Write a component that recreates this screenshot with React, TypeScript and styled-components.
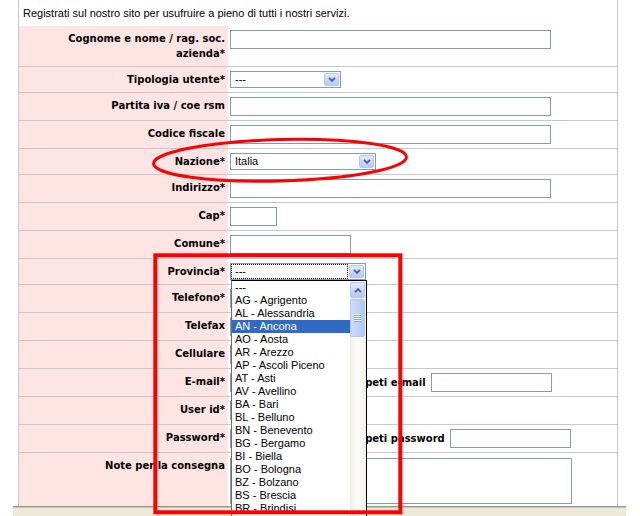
import React from "react";
import styled, { createGlobalStyle } from "styled-components";

const GlobalStyle = createGlobalStyle`
  html, body {
    margin: 0;
    padding: 0;
    background: #fff;
  }
  body {
    font-family: "Liberation Sans", Arial, sans-serif;
    font-size: 11px;
    color: #000;
  }
`;

const Page = styled.div`
  position: relative;
  width: 640px;
  height: 516px;
  overflow: hidden;
  background: #fff;
`;

const Viewport = styled.div`
  height: 506px;
`;

const Frame = styled.div`
  margin-left: 18px;
  width: 600px;
  min-height: 100%;
  box-sizing: border-box;
  border-left: 1px solid #c8c8c8;
  border-right: 1px solid #c8c8c8;
`;

const Intro = styled.p`
  margin: 0;
  height: 26px;
  box-sizing: border-box;
  padding: 6px 4px 5px;
  line-height: 15px;
`;

const Row = styled.div`
  display: grid;
  grid-template-columns: 209px 1fr;
  border-bottom: 1px solid #c8c8c8;
`;

const Label = styled.div`
  background: #ffe4e4;
  padding: 5px 3px 5px 4px;
  text-align: right;
  font: bold 10px/15px "DejaVu Sans", Verdana, sans-serif;
`;

const Field = styled.div`
  align-self: start;
  display: flex;
  align-items: center;
  padding: 4px 0 4px 2px;
`;

const InlineLabel = styled.span`
  margin: 0 5px 0 3px;
  white-space: nowrap;
  font: bold 10px/15px "DejaVu Sans", Verdana, sans-serif;
`;

const TextInput = styled.input<{ $w: number }>`
  box-sizing: border-box;
  width: ${(p) => p.$w}px;
  height: 19px;
  margin: 0;
  padding: 1px 2px;
  border: 1px solid #7f9db9;
  background: #fff;
  font: 11px "Liberation Sans", Arial, sans-serif;
`;

const TextArea = styled.textarea`
  display: block;
  box-sizing: border-box;
  width: 342px;
  height: 46px;
  margin: 1px 0 0;
  border: 1px solid #7f9db9;
  resize: none;
  font: 11px "Liberation Sans", Arial, sans-serif;
`;

const SelectBox = styled.div<{ $w: number }>`
  position: relative;
  display: flex;
  box-sizing: border-box;
  width: ${(p) => p.$w}px;
  height: 17px;
  border: 1px solid #7f9db9;
  background: #fff;
`;

const SelectValue = styled.span<{ $focused?: boolean }>`
  flex: 1;
  margin: 1px 2px 0 1px;
  padding-left: 3px;
  line-height: 13px;
  height: 13px;
  white-space: nowrap;
  overflow: hidden;
  outline: ${(p) => (p.$focused ? "1px dotted #000" : "none")};
`;

const ArrowButton = styled.span<{ $h?: number }>`
  display: flex;
  align-items: center;
  justify-content: center;
  box-sizing: border-box;
  width: 15px;
  height: ${(p) => p.$h ?? 13}px;
  margin: 1px 1px 0 0;
  border: 1px solid #b4c7f4;
  border-radius: 2px;
  background: linear-gradient(#e3ebfe, #c3d3fb 60%, #b6c9f7);
`;

const Popup = styled.div`
  position: absolute;
  z-index: 5;
  top: calc(100% + 1px);
  left: 0;
  display: flex;
  box-sizing: border-box;
  width: 136px;
  height: 250px;
  border: 1px solid #000;
  border-left-color: #6f6f6f;
  background: #fff;
`;

const OptionList = styled.ul`
  flex: 1;
  margin: 0;
  padding: 0;
  list-style: none;
  overflow: hidden;
`;

const Option = styled.li<{ $selected?: boolean }>`
  height: 13px;
  padding-left: 3px;
  line-height: 13px;
  white-space: nowrap;
  background: ${(p) => (p.$selected ? "#316ac5" : "transparent")};
  color: ${(p) => (p.$selected ? "#fff" : "#000")};
`;

const ScrollTrack = styled.div`
  display: flex;
  flex-direction: column;
  width: 16px;
  background: linear-gradient(to right, #efeee7, #fcfcfa 45%, #f1f0ea);
`;

const ScrollThumb = styled.div`
  display: flex;
  align-items: center;
  justify-content: center;
  box-sizing: border-box;
  height: 38px;
  width: 15px;
  margin-top: 1px;
  border: 1px solid #b4c7f4;
  border-radius: 2px;
  background: linear-gradient(to right, #cfdcfd, #c0d2fb 50%, #b3c7f6);
`;

const Grip = styled.span`
  width: 7px;
  height: 8px;
  background: repeating-linear-gradient(
    to bottom,
    #eef3fe 0 1px,
    #8aa4e6 1px 2px
  );
`;

const StatusBar = styled.div`
  position: relative;
  z-index: 1;
  margin-left: 13px;
  width: 613px;
  height: 10px;
  box-sizing: border-box;
  border-top: 1px solid #99978b;
  box-shadow: inset 0 1px 0 #c7c4b6;
  background: #ece9d8;
`;

const Annotations = styled.svg`
  position: absolute;
  inset: 0;
  z-index: 10;
  pointer-events: none;
`;

const Chevron = ({ up }: { up?: boolean }) => (
  <svg width="8" height="5" viewBox="0 0 8 5">
    <polyline
      points={up ? "1,4.2 4,1.2 7,4.2" : "1,0.8 4,3.8 7,0.8"}
      fill="none"
      stroke="#4d6185"
      strokeWidth="1.9"
    />
  </svg>
);

const provinces = [
  "---",
  "AG - Agrigento",
  "AL - Alessandria",
  "AN - Ancona",
  "AO - Aosta",
  "AR - Arezzo",
  "AP - Ascoli Piceno",
  "AT - Asti",
  "AV - Avellino",
  "BA - Bari",
  "BL - Belluno",
  "BN - Benevento",
  "BG - Bergamo",
  "BI - Biella",
  "BO - Bologna",
  "BZ - Bolzano",
  "BS - Brescia",
  "BR - Brindisi",
  "BB - Brindisi",
];

interface SelectProps {
  width: number;
  value: string;
  focused?: boolean;
  children?: React.ReactNode;
}

const Select = ({ width, value, focused, children }: SelectProps) => (
  <SelectBox $w={width}>
    <SelectValue $focused={focused}>{value}</SelectValue>
    <ArrowButton>
      <Chevron />
    </ArrowButton>
    {children}
  </SelectBox>
);

const ProvinceList = () => (
  <Popup>
    <OptionList>
      {provinces.slice(0, 18).map((p) => (
        <Option key={p} $selected={p === "AN - Ancona"}>
          {p}
        </Option>
      ))}
    </OptionList>
    <ScrollTrack>
      <ArrowButton $h={16}>
        <Chevron up />
      </ArrowButton>
      <ScrollThumb>
        <Grip />
      </ScrollThumb>
    </ScrollTrack>
  </Popup>
);

interface FormRow {
  label: string;
  field: React.ReactNode;
}

const rows: FormRow[] = [
  { label: "Cognome e nome / rag. soc. azienda*", field: <TextInput $w={321} /> },
  { label: "Tipologia utente*", field: <Select width={111} value="---" /> },
  { label: "Partita iva / coe rsm", field: <TextInput $w={321} /> },
  { label: "Codice fiscale", field: <TextInput $w={321} /> },
  { label: "Nazione*", field: <Select width={146} value="Italia" /> },
  { label: "Indirizzo*", field: <TextInput $w={321} /> },
  { label: "Cap*", field: <TextInput $w={47} /> },
  { label: "Comune*", field: <TextInput $w={121} /> },
  {
    label: "Provincia*",
    field: (
      <Select width={136} value="---" focused>
        <ProvinceList />
      </Select>
    ),
  },
  { label: "Telefono*", field: <TextInput $w={121} /> },
  { label: "Telefax", field: <TextInput $w={121} /> },
  { label: "Cellulare", field: <TextInput $w={121} /> },
  {
    label: "E-mail*",
    field: (
      <>
        <TextInput $w={121} />
        <InlineLabel>Ripeti e-mail</InlineLabel>
        <TextInput $w={121} />
      </>
    ),
  },
  { label: "User id*", field: <TextInput $w={121} /> },
  {
    label: "Password*",
    field: (
      <>
        <TextInput $w={121} type="password" />
        <InlineLabel>Ripeti password</InlineLabel>
        <TextInput $w={121} type="password" />
      </>
    ),
  },
  { label: "Note per la consegna", field: <TextArea /> },
];

const App = () => (
  <Page>
    <GlobalStyle />
    <Viewport>
      <Frame>
        <Intro>
          Registrati sul nostro sito per usufruire a pieno di tutti i nostri servizi.
        </Intro>
        {rows.map((row) => (
          <Row key={row.label}>
            <Label>{row.label}</Label>
            <Field>{row.field}</Field>
          </Row>
        ))}
      </Frame>
    </Viewport>
    <StatusBar />
    <Annotations width="640" height="516" viewBox="0 0 640 516">
      <ellipse
        cx="280"
        cy="160.3"
        rx="126.5"
        ry="20.7"
        transform="rotate(-1.5 280 160)"
        fill="none"
        stroke="#ff0000"
        strokeWidth="3"
      />
      <rect
        x="155.3"
        y="255.3"
        width="245"
        height="257"
        fill="none"
        stroke="#ff0000"
        strokeWidth="4"
      />
    </Annotations>
  </Page>
);

export default App;
